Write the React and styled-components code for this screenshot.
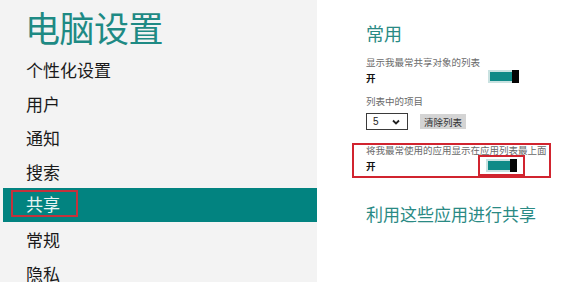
import React from 'react';
import styled, { createGlobalStyle } from 'styled-components';

const GlobalStyle = createGlobalStyle`
  html, body {
    margin: 0;
    padding: 0;
    background: #ffffff;
  }
  body {
    font-family: "Noto Sans CJK SC", "Noto Sans", sans-serif;
  }
  * { box-sizing: border-box; }
`;

const Page = styled.div`
  display: flex;
  width: 567px;
  height: 282px;
  overflow: hidden;
`;

const Sidebar = styled.div`
  width: 317px;
  flex-shrink: 0;
  background: #f3f3f3;
  padding-top: 9px;
`;

const Title = styled.h1`
  margin: 0 0 8px 25px;
  font-size: 35px;
  line-height: 35px;
  font-weight: 400;
  color: #1e8a84;
  letter-spacing: -0.5px;
`;

const Menu = styled.ul`
  list-style: none;
  margin: 0 0 0 3px;
  padding: 0;
`;

const MenuItem = styled.li`
  height: 34px;
  display: flex;
  align-items: center;
  padding-left: ${(p) => (p.$active ? '8px' : '23px')};
  font-size: 17px;
  color: ${(p) => (p.$active ? '#e6f4f2' : '#1a1a1a')};
  background: ${(p) => (p.$active ? '#028380' : 'transparent')};
`;

const Marked = styled.span`
  display: flex;
  align-items: center;
  width: 67px;
  height: 27px;
  margin-bottom: 3px;
  padding-left: 13px;
  border: 2px solid #c4323c;
`;

const Content = styled.div`
  flex: 1;
  background: #ffffff;
  padding: 24px 0 0 49px;
`;

const Heading = styled.h2`
  margin: 0;
  font-size: ${(p) => p.$size || 18}px;
  line-height: ${(p) => p.$size || 18}px;
  font-weight: 400;
  color: #2a8a84;
  margin-top: ${(p) => p.$top || 0}px;
`;

const Label = styled.div`
  font-size: 9.5px;
  line-height: ${(p) => p.$lh || 10}px;
  color: #6a6a6a;
  margin-top: ${(p) => p.$top || 0}px;
  white-space: nowrap;
`;

const ToggleRow = styled.div`
  display: flex;
  align-items: ${(p) => p.$align || 'flex-end'};
  justify-content: space-between;
  width: ${(p) => p.$width}px;
  margin-top: ${(p) => p.$top || 0}px;
`;

const OnText = styled.span`
  font-size: 9.5px;
  line-height: 10px;
  font-weight: 700;
  color: #111;
`;

const Toggle = styled.div`
  width: 31px;
  height: 13px;
  display: flex;
  border: 2px solid #c9e2e1;
  background: #0f8a87;
`;

const Thumb = styled.div`
  margin-left: auto;
  width: 7px;
  height: 13px;
  margin-top: -2px;
  margin-right: -2px;
  background: #050505;
`;

const ToggleMark = styled.div`
  padding: 2px 6px;
  border: 2px solid #d1242f;
`;

const Controls = styled.div`
  display: flex;
  align-items: center;
  gap: 12px;
  margin-top: 7px;
`;

const SelectBox = styled.div`
  width: 42px;
  height: 17px;
  border: 1px solid #3a3a3a;
  background: #fff;
  display: flex;
  align-items: center;
  justify-content: space-between;
  padding: 0 7px 0 6px;
  font-family: "Liberation Sans", sans-serif;
  font-size: 10px;
  color: #222;
`;

const ClearButton = styled.div`
  height: 15px;
  padding: 0 4px;
  background: #d4d4d4;
  display: flex;
  align-items: center;
  font-size: 9.5px;
  color: #333;
`;

const MarkedGroup = styled.div`
  width: 199px;
  margin: 13px 0 0 -14px;
  padding: 1px 0 0 12px;
  border: 2px solid #d1242f;
`;

const Chevron = () => (
  <svg width="8" height="6" viewBox="0 0 8 6">
    <path d="M1 1.5 L4 4.5 L7 1.5" fill="none" stroke="#222" strokeWidth="1.8" />
  </svg>
);

const items = ['个性化设置', '用户', '通知', '搜索', '共享', '常规', '隐私'];

export default function App() {
  return (
    <Page>
      <GlobalStyle />
      <Sidebar>
        <Title>电脑设置</Title>
        <Menu>
          {items.map((it) =>
            it === '共享' ? (
              <MenuItem key={it} $active>
                <Marked>{it}</Marked>
              </MenuItem>
            ) : (
              <MenuItem key={it}>{it}</MenuItem>
            )
          )}
        </Menu>
      </Sidebar>
      <Content>
        <Heading>常用</Heading>
        <Label $top={15}>显示我最常共享对象的列表</Label>
        <ToggleRow $width={153} $top={3}>
          <OnText>开</OnText>
          <Toggle>
            <Thumb />
          </Toggle>
        </ToggleRow>
        <Label $top={13}>列表中的项目</Label>
        <Controls>
          <SelectBox>
            <span>5</span>
            <Chevron />
          </SelectBox>
          <ClearButton>清除列表</ClearButton>
        </Controls>
        <MarkedGroup>
          <Label $lh={9}>将我最常使用的应用显示在应用列表最上面</Label>
          <ToggleRow $width={159} $align="center">
            <OnText>开</OnText>
            <ToggleMark>
              <Toggle>
                <Thumb />
              </Toggle>
            </ToggleMark>
          </ToggleRow>
        </MarkedGroup>
        <Heading $size={17} $top={27}>利用这些应用进行共享</Heading>
      </Content>
    </Page>
  );
}
